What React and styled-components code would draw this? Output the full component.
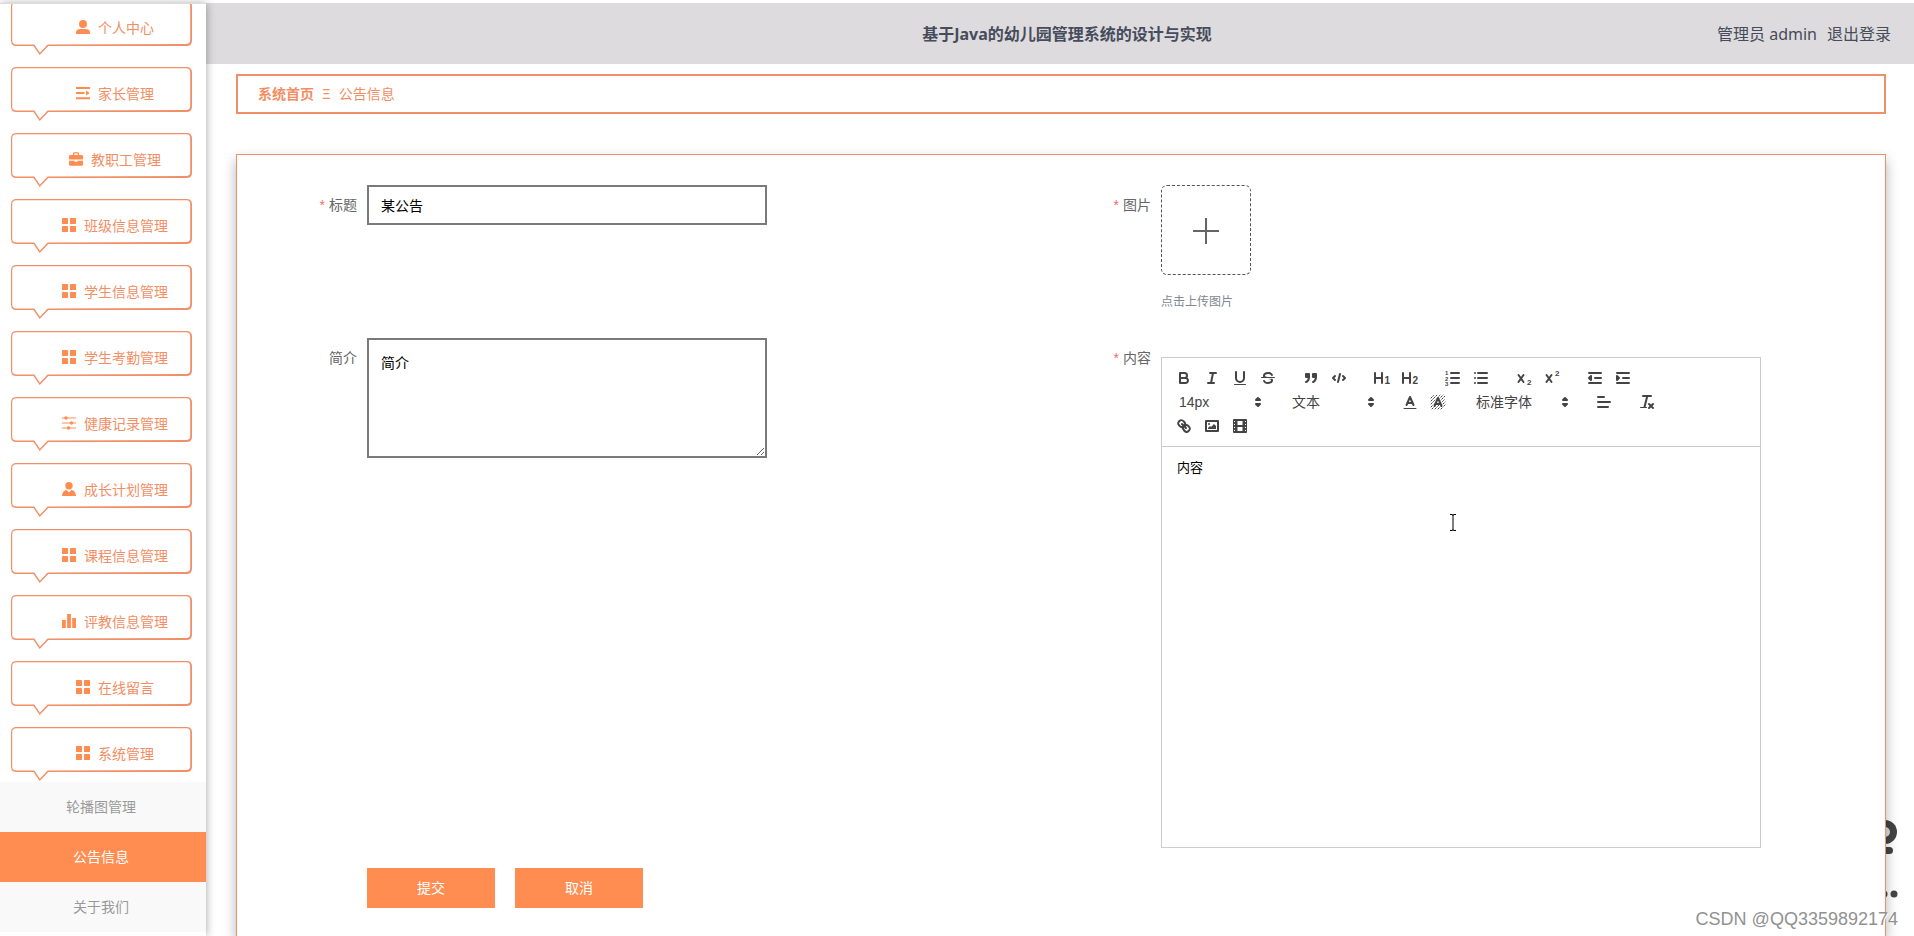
import React, { useState } from 'react'
import styled, { createGlobalStyle, ThemeProvider } from 'styled-components'

const theme = {
  main: '#ff8d52',
  line: '#f19068',
  text: '#f28e64',
  grey: '#7a7a7a',
  font: '"Noto Sans", "Noto Sans CJK SC", sans-serif',
}

const GlobalStyle = createGlobalStyle`
* { box-sizing: border-box; }
body {
  margin: 0;
  background: #fff;
  font-family: ${theme.font};
  font-size: 14px;
}
a { color: inherit; text-decoration: none; }
button, input, textarea, select { font-family: inherit; }
`

const Page = styled.div`
  display: flex;
  position: relative;
  height: 100vh;
  padding-top: 3px;
  overflow: hidden;
`
const Sidebar = styled.aside`
  flex: none;
  width: 206px;
  border-top: 1px solid #dddbdd;
  background: #fff;
  box-shadow: 1px 0 8px rgba(0, 0, 0, 0.3);
  overflow: hidden;
  z-index: 2;
`
const Menu = styled.nav`
  margin-top: -14px;
`
const MenuItem = styled.a`
  position: relative;
  display: flex;
  align-items: center;
  justify-content: center;
  gap: 8px;
  height: 66px;
  padding: 8px 0 0 24px;
  color: ${({ theme }) => theme.text};
`
const Bubble = styled.svg`
  position: absolute;
  left: 11px;
  top: 11px;
  width: 182px;
  height: 55px;
  fill: ${({ theme }) => theme.line};
`
const MenuIcon = styled.svg`
  width: 14px;
  height: 14px;
  fill: ${({ theme }) => theme.main};
`
const SubItem = styled.a`
  display: flex;
  align-items: center;
  justify-content: center;
  height: 50px;
  padding: 0 4px 2px 0;
  color: ${({ $active }) => ($active ? '#fff' : '#999')};
  background: ${({ $active, theme }) => ($active ? theme.main : '#f9f9f9')};
`
const Main = styled.div`
  flex: 1;
  display: flex;
  flex-direction: column;
  min-width: 0;
`
const Header = styled.header`
  flex: none;
  display: grid;
  grid-template-columns: 1fr auto 1fr;
  align-items: center;
  height: 61px;
  padding: 0 10px 2px 24px;
  background: #dddbdd;
  color: #464c5b;
  font-size: 16px;
`
const Title = styled.h1`
  grid-column: 2;
  margin: 0;
  font-size: 16px;
  font-weight: 700;
`
const User = styled.div`
  display: flex;
  justify-content: flex-end;
  gap: 10px;
  padding-right: 13px;
`
const Content = styled.main`
  flex: 1;
  display: flex;
  flex-direction: column;
  gap: 40px;
  min-height: 0;
  padding: 10px 28px 0 30px;
`
const Breadcrumb = styled.nav`
  flex: none;
  display: flex;
  align-items: center;
  gap: 8px;
  height: 40px;
  padding: 0 20px 2px;
  border: 2px solid ${({ theme }) => theme.line};
  color: ${({ theme }) => theme.text};
`
const Card = styled.form`
  flex: 1;
  padding: 30px 30px 0;
  border: 1px solid ${({ theme }) => theme.line};
  border-bottom: 0;
  background: #fff;
  box-shadow: 0 6px 12px rgba(0, 0, 0, 0.3);
  z-index: 1;
`
const Row = styled.div`
  display: grid;
  grid-template-columns: 1fr 1fr;
  margin-bottom: ${({ $gap }) => $gap}px;
`
const Field = styled.div`
  display: flex;
  align-items: flex-start;
`
const Label = styled.label`
  flex: none;
  width: 100px;
  padding-right: 10px;
  line-height: 40px;
  text-align: right;
  color: #666;
`
const Star = styled.span`
  margin-right: 4px;
  font-family: "Liberation Sans", sans-serif;
  color: #f56c6c;
`
const TextInput = styled.input`
  width: 400px;
  height: 40px;
  padding: 0 12px;
  border: 2px solid ${({ theme }) => theme.grey};
  font-size: 14px;
  color: #000;
  outline: none;
`
const TextArea = styled.textarea`
  width: 400px;
  height: 120px;
  padding: 12px;
  border: 2px solid ${({ theme }) => theme.grey};
  font-size: 14px;
  line-height: 21px;
  color: #000;
  outline: none;
`
const Upload = styled.button`
  display: flex;
  align-items: center;
  justify-content: center;
  width: 90px;
  height: 90px;
  padding: 2px 0 0;
  border: 1px dashed #555;
  border-radius: 6px;
  background: #fff;
`
const Tip = styled.div`
  margin-top: 17px;
  font-size: 12px;
  line-height: 20px;
  color: #7f8893;
`
const Editor = styled.div`
  width: 600px;
  margin-top: 19px;
  border: 1px solid #ccc;
`
const Toolbar = styled.div`
  display: flex;
  flex-wrap: wrap;
  padding: 8px;
  border-bottom: 1px solid #ccc;
  font-family: "Liberation Sans", "Noto Sans CJK SC", sans-serif;
`
const Formats = styled.div`
  display: flex;
  margin-right: 15px;
`
const Tool = styled.button`
  width: 28px;
  height: 24px;
  padding: 3px 5px;
  border: 0;
  background: none;
`
const ToolIcon = styled.svg`
  display: block;
  width: 18px;
  height: 18px;
  fill: none;
  stroke: #444;
  stroke-width: 2;
  stroke-linecap: round;
  stroke-linejoin: round;
  .fill { fill: #444; stroke: none; }
  .both { fill: #444; }
  .thin { stroke-width: 1; }
  text { fill: #444; stroke: none; font-weight: 700; }
`
const Picker = styled.span`
  display: flex;
  align-items: center;
  position: relative;
  width: ${({ $width }) => $width}px;
  height: 24px;
`
const PickerSelect = styled.select`
  width: 100%;
  height: 24px;
  padding: 0 20px 0 9px;
  border: 0;
  background: none;
  appearance: none;
  font-size: 14px;
  color: #444;
`
const PickerArrow = styled(ToolIcon)`
  position: absolute;
  right: 1px;
  pointer-events: none;
`
const EditorText = styled.textarea`
  display: block;
  width: 100%;
  height: 400px;
  padding: 11px 15px;
  border: 0;
  resize: none;
  font-size: 13px;
  line-height: 18px;
  color: #000;
  outline: none;
`
const Actions = styled.div`
  display: flex;
  gap: 20px;
  padding-left: 100px;
`
const Button = styled.button`
  width: 128px;
  height: 40px;
  padding: 0 0 2px;
  border: 0;
  background: ${({ theme }) => theme.main};
  color: #fff;
  font-size: 14px;
`
const Mascot = styled.svg`
  position: absolute;
  right: 16px;
  bottom: 37px;
  width: 26px;
  height: 80px;
  fill: #444;
`
const Watermark = styled.div`
  position: absolute;
  right: 16px;
  bottom: 6px;
  font-family: "Liberation Sans", sans-serif;
  font-size: 18px;
  line-height: 22px;
  color: #919191;
  text-shadow: 1px 1px 0 #fff;
  z-index: 3;
`
const Caret = styled.svg`
  position: absolute;
  left: 1449px;
  top: 514px;
  width: 8px;
  height: 17px;
  pointer-events: none;
  z-index: 3;
`

const menuIcons = {
  user: (
    <>
      <circle cx="7" cy="4" r="4" />
      <path d="M0 14v-1.600C0 9.900 2 9 4.500 9h5C12 9 14 9.900 14 12.400V14z" />
    </>
  ),
  fold: <path d="M0 1h14v2H0zM0 6h8.500v2H0zM0 11.200h14v2H0zM10 4.500l3.800 2.500L10 9.500z" />,
  bag: (
    <path d="M4 3V1.500Q4 .3 5.200.3h3.600Q10 .3 10 1.500V3h3q1 0 1 1v3.500H0V4q0-1 1-1zM5.200 3h3.600V1.500H5.200zM0 8.700h5.500v1h3v-1H14V12.700q0 1-1 1H1q-1 0-1-1z" fillRule="evenodd" />
  ),
  grid: (
    <>
      <rect x="0" y="0" width="6" height="6" rx="0.600" />
      <rect x="8" y="0" width="6" height="6" rx="0.600" />
      <rect x="0" y="8" width="6" height="6" rx="0.600" />
      <rect x="8" y="8" width="6" height="6" rx="0.600" />
    </>
  ),
  sliders: (
    <>
      <path d="M0 1.500h14v1H0zM0 6.500h14v1H0zM0 11.500h14v1H0z" />
      <circle cx="4" cy="2" r="1.700" />
      <circle cx="9.500" cy="7" r="1.700" />
      <circle cx="6.500" cy="12" r="1.700" />
    </>
  ),
  custom: (
    <>
      <circle cx="7" cy="3.700" r="3.700" />
      <path d="M4.300 7.700L7 10.500l2.700-2.800C12.400 8.500 14 11 14 14H0c0-3 1.600-5.500 4.300-6.300z" />
    </>
  ),
  bars: <path d="M0 6h3.800v8H0zM5.100 0h3.800v14H5.100zM10.200 4H14v10h-3.800z" />,
}

const menu = [
  ['user', '个人中心'],
  ['fold', '家长管理'],
  ['bag', '教职工管理'],
  ['grid', '班级信息管理'],
  ['grid', '学生信息管理'],
  ['grid', '学生考勤管理'],
  ['sliders', '健康记录管理'],
  ['custom', '成长计划管理'],
  ['grid', '课程信息管理'],
  ['bars', '评教信息管理'],
  ['grid', '在线留言'],
  ['grid', '系统管理'],
]
const subMenu = ['轮播图管理', '公告信息', '关于我们']

const toolIcons = {
  bold: (
    <>
      <path d="M5,4H9.500A2.500,2.500,0,0,1,12,6.500v0A2.500,2.500,0,0,1,9.500,9H5Z" />
      <path d="M5,9h5.500A2.500,2.500,0,0,1,13,11.500v0A2.500,2.500,0,0,1,10.500,14H5Z" />
    </>
  ),
  italic: <path d="M7 4h6M5 14h6M8 14l2-10" />,
  underline: (
    <>
      <path d="M5,3V9a4,4,0,0,0,8,0V3" />
      <rect className="fill" x="3" y="15" width="12" height="1" rx="0.500" />
    </>
  ),
  strike: (
    <>
      <path className="thin" d="M2.500 8.500h13" />
      <path className="fill" d="M9.007,8C6.542,7.791,6,7.519,6,6.500,6,5.792,7.283,5,9,5c1.571,0,2.765.679,2.969,1.309a1,1,0,0,0,1.900-.617C13.356,4.106,11.354,3,9,3,6.200,3,4,4.538,4,6.500a3.200,3.200,0,0,0,.5,1.843Z" />
      <path className="fill" d="M8.984,10C11.457,10.208,12,10.479,12,11.500c0,.708-1.283,1.500-3,1.500-1.571,0-2.765-.679-2.969-1.309a1,1,0,1,0-1.900.617C4.644,13.894,6.646,15,9,15c2.800,0,5-1.538,5-3.500a3.200,3.200,0,0,0-.5-1.843Z" />
    </>
  ),
  quote: (
    <>
      <rect className="both" x="4" y="5" width="3" height="3" />
      <rect className="both" x="11" y="5" width="3" height="3" />
      <path className="both" d="M7,8c0,4.031-3,5-3,5" />
      <path className="both" d="M14,8c0,4.031-3,5-3,5" />
    </>
  ),
  code: <path d="M5 7L3 9l2 2M13 7l2 2-2 2M10 5L8 13" />,
  h1: (
    <>
      <path d="M2 4v10M9 4v10M2 9h7" />
      <text x="11.500" y="15" fontSize="10">1</text>
    </>
  ),
  h2: (
    <>
      <path d="M2 4v10M9 4v10M2 9h7" />
      <text x="11.500" y="15" fontSize="10">2</text>
    </>
  ),
  ordered: (
    <>
      <path d="M7 4h8M7 9h8M7 14h8" />
      <text x="1" y="6" fontSize="6">1</text>
      <text x="1" y="11.500" fontSize="6">2</text>
      <text x="1" y="17" fontSize="6">3</text>
    </>
  ),
  bullet: <path d="M6 4h9M6 9h9M6 14h9M3 4h0M3 9h0M3 14h0" />,
  sub: (
    <>
      <path d="M3.500 6l5 7M8.500 6l-5 7" />
      <text x="12" y="16" fontSize="8">2</text>
    </>
  ),
  sup: (
    <>
      <path d="M3.500 6l5 7M8.500 6l-5 7" />
      <text x="12" y="7" fontSize="8">2</text>
    </>
  ),
  outdent: (
    <>
      <path d="M3 14h12M3 4h12M9 9h6" />
      <path className="both" d="M5 7v4L3 9z" />
    </>
  ),
  indent: (
    <>
      <path d="M3 14h12M3 4h12M9 9h6" />
      <path className="both" d="M3 7v4l2-2z" />
    </>
  ),
  color: (
    <>
      <path className="thin" d="M3 15.500h12" />
      <path d="M5.500 12L9 4l3.500 8M11.600 10H6.400" />
    </>
  ),
  background: (
    <>
      <path className="thin" strokeDasharray="1 1.400" d="M2 5l3-3M2 8l6-6M2 11l9-9M2 14l12-12M3 16L16 3M6 16L16 6M9 16l7-7M12 16l4-4" />
      <path stroke="#fff" strokeWidth="4" d="M5.500 13L9 5l3.500 8" opacity="0.600" />
      <path d="M5.500 13L9 5l3.500 8M11.600 11H6.400" />
    </>
  ),
  align: <path d="M3 9h12M3 14h10M3 4h6" />,
  clean: (
    <>
      <path d="M5 3h8M6.500 14L9.300 3M11 11l4 4M15 11l-4 4" />
      <rect className="fill" x="2" y="14" width="7" height="1" rx="0.500" />
    </>
  ),
  link: (
    <>
      <path d="M7 7l4 4" />
      <path d="M8.900,4.577a3.476,3.476,0,0,1,.36,4.679A3.476,3.476,0,0,1,4.577,8.900C3.185,7.500,2.035,6.400,4.217,4.217S7.500,3.185,8.900,4.577Z" />
      <path d="M13.423,9.100a3.476,3.476,0,0,0-4.679-.36,3.476,3.476,0,0,0,.36,4.679c1.392,1.392,2.500,2.542,4.679.36S14.815,10.500,13.423,9.100Z" />
    </>
  ),
  image: (
    <>
      <rect x="3" y="4" width="12" height="10" />
      <circle className="fill" cx="6" cy="7" r="1" />
      <path className="fill" d="M5 12V11l2-2 1 1 3-3 2 2v3z" />
    </>
  ),
  video: (
    <>
      <rect className="both" x="3" y="3" width="12" height="12" />
      <path stroke="#fff" strokeWidth="1" strokeLinecap="butt" strokeDasharray="1 2" d="M3.500 4v12M14.500 4v12" />
      <rect x="6.500" y="4" width="5" height="4" fill="#fff" stroke="none" />
      <rect x="6.500" y="10" width="5" height="4" fill="#fff" stroke="none" />
    </>
  ),
}

const firstTools = [
  ['bold', 'italic', 'underline', 'strike'],
  ['quote', 'code'],
  ['h1', 'h2'],
  ['ordered', 'bullet'],
  ['sub', 'sup'],
  ['outdent', 'indent'],
]

const ToolGroup = ({ names }) => (
  <Formats>
    {names.map((name) => (
      <Tool key={name} type="button" aria-label={name}>
        <ToolIcon viewBox="0 0 18 18">{toolIcons[name]}</ToolIcon>
      </Tool>
    ))}
  </Formats>
)

const ToolPicker = ({ name, width, value }) => (
  <Formats>
    <Picker $width={width}>
      <PickerSelect aria-label={name}>
        <option>{value}</option>
      </PickerSelect>
      <PickerArrow viewBox="0 0 18 18">
        <path className="both" d="M7 7l2-2 2 2zM7 11l2 2 2-2z" />
      </PickerArrow>
    </Picker>
  </Formats>
)

const App = () => {
  const [title, setTitle] = useState('某公告')
  const [intro, setIntro] = useState('简介')
  const [content, setContent] = useState('内容')

  return (
    <ThemeProvider theme={theme}>
      <GlobalStyle />
      <Page>
        <Sidebar>
          <Menu>
            {menu.map(([icon, name]) => (
              <MenuItem key={name} href="#">
                <Bubble viewBox="0 0 182 55">
                  <path
                    fillRule="evenodd"
                    d="M5.500 0H175.500Q181 0 181 5.500V39.500Q181 45 175.500 45H37.300L28.700 54L22.500 45H5.500Q0 45 0 39.500V5.500Q0 0 5.500 0ZM5.500 1.300Q1.200 1.300 1.200 5.500V39.500Q1.200 43.600 5.500 43.600H23.300L28.900 51.800L36.600 43.600L175 42.900Q179.200 42.900 179.200 39V5.500Q179.200 1.300 175.500 1.300Z"
                  />
                </Bubble>
                <MenuIcon viewBox="0 0 14 14">{menuIcons[icon]}</MenuIcon>
                <span>{name}</span>
              </MenuItem>
            ))}
            {subMenu.map((name) => (
              <SubItem key={name} href="#" $active={name === '公告信息'}>{name}</SubItem>
            ))}
          </Menu>
        </Sidebar>
        <Main>
          <Header>
            <Title>基于Java的幼儿园管理系统的设计与实现</Title>
            <User>
              <span>管理员 admin</span>
              <a href="#">退出登录</a>
            </User>
          </Header>
          <Content>
            <Breadcrumb>
              <a href="#"><b>系统首页</b></a>
              <span>Ξ</span>
              <span>公告信息</span>
            </Breadcrumb>
            <Card onSubmit={(e) => e.preventDefault()}>
              <Row $gap={26}>
                <Field>
                  <Label htmlFor="title"><Star>*</Star>标题</Label>
                  <TextInput id="title" value={title} onChange={(e) => setTitle(e.target.value)} />
                </Field>
                <Field>
                  <Label htmlFor="picture"><Star>*</Star>图片</Label>
                  <div>
                    <Upload id="picture" type="button">
                      <svg width="26" height="26" viewBox="0 0 26 26" stroke="#666" strokeWidth="2">
                        <path d="M0 13h26M13 0v26" />
                      </svg>
                    </Upload>
                    <Tip>点击上传图片</Tip>
                  </div>
                </Field>
              </Row>
              <Row $gap={20}>
                <Field>
                  <Label htmlFor="intro">简介</Label>
                  <TextArea id="intro" value={intro} onChange={(e) => setIntro(e.target.value)} />
                </Field>
                <Field>
                  <Label htmlFor="content"><Star>*</Star>内容</Label>
                  <Editor>
                    <Toolbar>
                      {firstTools.map((names) => <ToolGroup key={names[0]} names={names} />)}
                      <ToolPicker name="size" width={98} value="14px" />
                      <ToolPicker name="header" width={98} value="文本" />
                      <ToolGroup names={['color', 'background']} />
                      <ToolPicker name="font" width={108} value="标准字体" />
                      <ToolGroup names={['align']} />
                      <ToolGroup names={['clean']} />
                      <ToolGroup names={['link', 'image', 'video']} />
                    </Toolbar>
                    <EditorText id="content" value={content} onChange={(e) => setContent(e.target.value)} />
                  </Editor>
                </Field>
              </Row>
              <Actions>
                <Button type="submit">提交</Button>
                <Button type="button">取消</Button>
              </Actions>
            </Card>
          </Content>
        </Main>
        <Mascot viewBox="0 0 26 80">
          <circle cx="13" cy="13" r="12" />
          <circle cx="13" cy="13" r="5" fill="#ddd" />
          <rect x="4" y="28" width="17" height="7" rx="3.500" />
          <circle cx="12" cy="75" r="3.500" />
          <circle cx="22" cy="75" r="3.500" />
        </Mascot>
        <Caret viewBox="0 0 8 17" stroke="#000" fill="none">
          <path d="M1 0.500h2.500l0.500 1l0.500-1H7M1 16.500h2.500l0.500-1l0.500 1H7M4 1v15" />
        </Caret>
        <Watermark>CSDN @QQ3359892174</Watermark>
      </Page>
    </ThemeProvider>
  )
}

export default App
